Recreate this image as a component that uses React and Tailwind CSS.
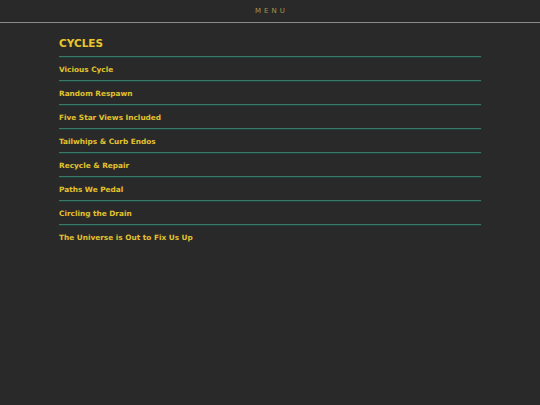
import React from "react";

const cycles = [
  "Vicious Cycle",
  "Random Respawn",
  "Five Star Views Included",
  "Tailwhips & Curb Endos",
  "Recycle & Repair",
  "Paths We Pedal",
  "Circling the Drain",
  "The Universe is Out to Fix Us Up",
];

const Rule = () => (
  <div className="h-[2px] border-t border-[#3b7867] bg-[#1e3f37]" />
);

const App = () => {
  return (
    <div className="min-h-[405px] w-full bg-[#292929] font-['DejaVu_Sans',Verdana,sans-serif]">
      <header className="h-[23px] border-b border-[#8a8a8a] flex items-center justify-center">
        <span className="text-[7px] tracking-[3px] text-[#a8964f] pl-[3px]">
          MENU
        </span>
      </header>

      <main className="ml-[59px] w-[422px]">
        <h2 className="pt-[13px] pb-[6px] text-[10.5px] leading-[14px] font-bold text-[#e8c62c]">
          CYCLES
        </h2>
        <Rule />
        {cycles.map((title, i) => (
          <div key={title}>
            <div className="h-[22px] pt-[2px] flex items-center text-[7.35px] font-bold text-[#e2c22c]">
              {title}
            </div>
            {i < cycles.length - 1 && <Rule />}
          </div>
        ))}
      </main>
    </div>
  );
};

export default App;
